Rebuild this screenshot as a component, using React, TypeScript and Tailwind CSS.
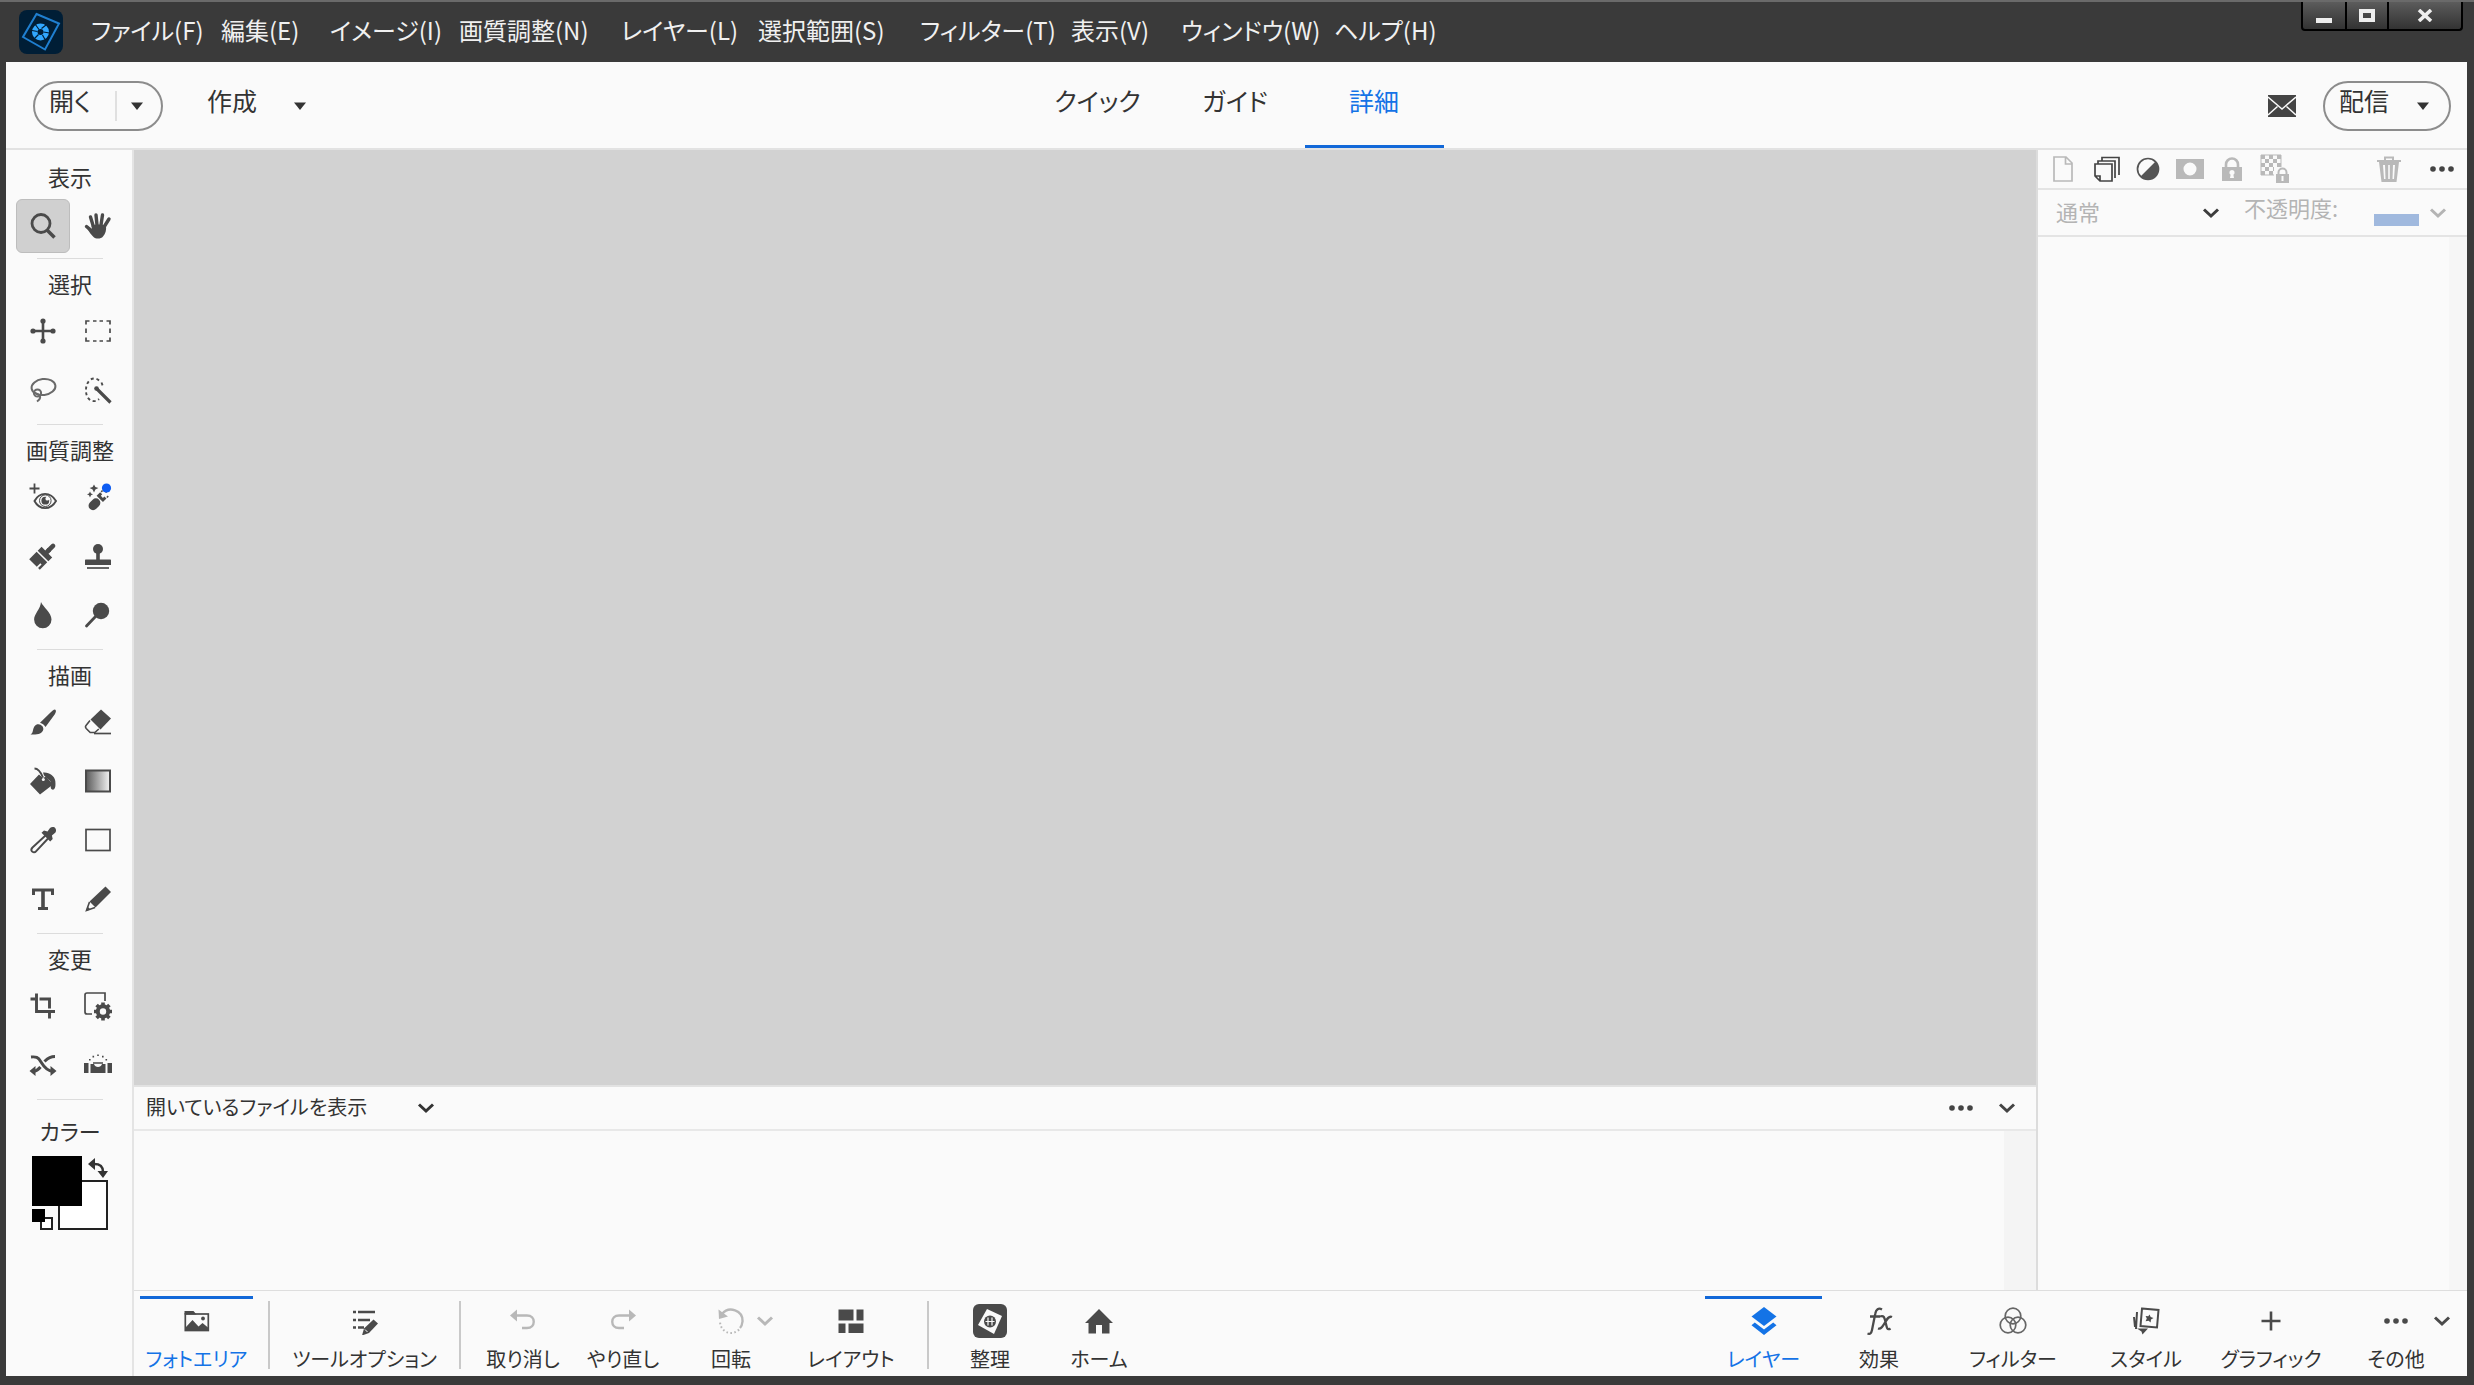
import React from "react";
import type { ReactNode } from "react";

type GlyphProps = { children: ReactNode; className?: string; box?: string };

function Glyph({ children, className = "size-7", box = "0 0 28 28" }: GlyphProps) {
  return (
    <svg viewBox={box} className={"shrink-0 " + className} fill="none" stroke="currentColor" strokeWidth="2" aria-hidden="true">
      {children}
    </svg>
  );
}

const solid = { fill: "currentColor", stroke: "none" };

const Caret = () => (
  <Glyph box="0 0 12 8" className="h-2 w-3">
    <path {...solid} d="M0 0.5h12L6 8z" />
  </Glyph>
);
const Chevron = () => (
  <Glyph box="0 0 18 12" className="h-3 w-[18px]">
    <path d="M2 2.5 9 9l7-6.5" strokeWidth="3" />
  </Glyph>
);
const Dots = () => (
  <Glyph box="0 0 26 8" className="h-2 w-[26px]">
    <circle {...solid} cx="4" cy="4" r="2.800" />
    <circle {...solid} cx="13" cy="4" r="2.800" />
    <circle {...solid} cx="22" cy="4" r="2.800" />
  </Glyph>
);

const icons: Record<string, ReactNode> = {
  zoom: (
    <Glyph>
      <circle cx="12" cy="11.5" r="9" strokeWidth="2.8" />
      <path d="m18 18 7.5 7.5" strokeWidth="3.6" />
    </Glyph>
  ),
  hand: (
    <Glyph>
      <g strokeLinecap="round" strokeWidth="3.4">
        <path d="M9.500 15 6.500 5M13 13 12 3M17 13l1.500-10M20 15l5-8M9 20 2.500 14.500" />
      </g>
      <path {...solid} d="M7.500 13.500c4-1.500 10-1.500 14.500 0 .5 5-.5 8-3 11-2 2.500-7 2.800-9.500.5-2-2-4.500-5-7-9.500l2-1 3.500 2.500z" />
    </Glyph>
  ),
  move: (
    <Glyph>
      <path d="M14 4v20M4 14h20" strokeWidth="2.6" />
      <circle {...solid} cx="14" cy="4" r="2.600" />
      <circle {...solid} cx="14" cy="24" r="2.600" />
      <circle {...solid} cx="4" cy="14" r="2.600" />
      <circle {...solid} cx="24" cy="14" r="2.600" />
    </Glyph>
  ),
  marquee: (
    <Glyph>
      <path d="M2 7.500V4h3.500M22.500 4H26v3.500M26 20.500V24h-3.500M5.500 24H2v-3.500M2 11.500v4.500M26 11.500v4.500M9 4h3.500M15.500 4H19M9 24h3.500M15.500 24H19" strokeWidth="1.700" />
    </Glyph>
  ),
  lasso: (
    <Glyph>
      <g stroke="#6a6a6a" strokeWidth="2">
        <ellipse cx="14.500" cy="11" rx="12" ry="8" transform="rotate(-7 14.500 11)" />
        <circle cx="8.500" cy="17" r="3.600" />
        <path d="M4.500 15.500c1 2.500 5.500 2 6.500 4.500.6 2-.8 4-3 5.500" />
      </g>
    </Glyph>
  ),
  wand: (
    <Glyph>
      <path d="M15 4.500C12 1.500 7.500 2 5 5s-3 6-3 9.500.8 6.500 3.500 9 7 2 9.500-.5M17.500 6.500l1.500 4" strokeDasharray="3 2.800" strokeWidth="1.900" />
      <path d="m12 12 14.500 14.500" strokeWidth="3.200" />
      <circle {...solid} cx="12.500" cy="12.500" r="2.300" />
    </Glyph>
  ),
  redeye: (
    <Glyph>
      <path d="M5.500 0.500v10M0.500 5.500h10" strokeWidth="1.800" />
      <path d="M5.500 18c5-9.500 16-9.500 21.500 0-5.500 9.500-16.500 9.500-21.500 0z" strokeWidth="1.900" />
      <circle cx="16.300" cy="17.700" r="5.800" strokeWidth="1" />
      <circle {...solid} cx="16.300" cy="17.700" r="3.900" />
      <circle cx="18.300" cy="15.700" r="1.900" fill="#fafafa" stroke="none" />
    </Glyph>
  ),
  heal: (
    <Glyph>
      <g transform="rotate(-45 14 17)">
        <rect {...solid} x="2" y="13" width="13" height="9" rx="4.500" />
        <path {...solid} d="M16 13h5v3h-2v3h2v3h-5z" />
        <path d="M22 13.500h3M22 21.500h3" strokeWidth="1.500" strokeDasharray="2 1.500" />
        <circle {...solid} cx="25.500" cy="17" r="1" />
      </g>
      <path {...solid} d="m10 1.500 1.400 2.600 3 1-3 1.400L10 9.500 8.600 6.500l-3-1.400 3-1zM6 8.500l1 2 2 .8-2 1L6 14.500l-1-2.200-2-1 2-.8z" />
      <circle cx="22.500" cy="5" r="4.600" fill="#0d5cf2" stroke="none" />
    </Glyph>
  ),
  smartbrush: (
    <Glyph>
      <g transform="rotate(45 14 14)" {...solid}>
        <rect x="11.700" y="-2.500" width="4.600" height="11" rx="2.300" />
        <path d="M11.700 5h4.600v3.500h5.200v5.500H6.500V8.500h5.200z" />
        <path d="M6.500 15.500h15V26h-2.500v-5h-1.800v5H6.500z" />
      </g>
    </Glyph>
  ),
  stamp: (
    <Glyph>
      <circle {...solid} cx="14" cy="7" r="5" />
      <path {...solid} d="M12.200 10h3.600v7.500H26c.8 0 1 .5 1 1V23H1v-4.500c0-.5.2-1 1-1h10.200z" />
      <path d="M3 26h22" strokeWidth="1.700" />
    </Glyph>
  ),
  drop: (
    <Glyph>
      <path {...solid} d="M12 1c2 5 10.500 10.500 10.500 17.500a8.700 8.700 0 0 1-17.400 0C5 13 11.500 8 12 1z" />
    </Glyph>
  ),
  dodge: (
    <Glyph>
      <circle {...solid} cx="17" cy="10" r="8.200" />
      <path d="m12 15-9.500 10" strokeWidth="2.800" strokeLinecap="round" />
    </Glyph>
  ),
  brush: (
    <Glyph>
      <path {...solid} d="M26 1.500c1.500 1 1 2.500 0 4.500L16.500 19c-1.500-2-3-3.500-5.500-4.200L21.500 4.500c1.500-1.500 3-2.800 4.500-3zM9.500 16.200c3 .3 5.300 2.800 4.800 5.300-.8 4.200-6 5.500-12.800 5 1.500-1 2-2 2.500-4.300.7-3.500 2.500-6.200 5.500-6z" />
    </Glyph>
  ),
  eraser: (
    <Glyph>
      <path {...solid} d="M17 1.500 27 10.500 16.500 21.500 6.500 11.500z" />
      <path d="m6 12.500-4 5c-.8 1-.6 2 .2 3l4 4h4.600l4-3.500" strokeWidth="1.600" />
      <path d="M10 25.500h17" strokeWidth="1.700" />
    </Glyph>
  ),
  bucket: (
    <Glyph>
      <path {...solid} d="m10 7.500 4 3.500 3-1.500 7 8L11 27.500 1 17z" />
      <path d="M5.500 1.500c3.500 0 6 3 8.500 9" strokeWidth="1.900" />
      <path {...solid} d="M14 5.500c6-.7 11.500 3 12.300 8.500.3 3.500.5 7-1.500 8.500-2.500.8-3.500-1.500-3-4 .4-2 .3-3.500-1-5L15 8.500z" />
      <circle cx="14.300" cy="12.500" r="1.500" fill="#fafafa" stroke="none" />
    </Glyph>
  ),
  gradient: (
    <Glyph>
      <defs>
        <linearGradient id="toolGradient">
          <stop offset="0" stopColor="#5a5a5a" />
          <stop offset="1" stopColor="#f4f4f4" />
        </linearGradient>
      </defs>
      <rect x="2" y="3.500" width="24" height="21" fill="url(#toolGradient)" />
    </Glyph>
  ),
  dropper: (
    <Glyph>
      <path d="M16.500 9.500 3.500 21.500c-1.200 1.200-1.500 2.800-.5 4s3 1 4-.2L19 12.500" strokeWidth="1.900" />
      <path {...solid} d="M12.500 6.800 15 4.500l3.500 1L21 2c1.800-1.600 4.500-1.300 5.500.4 1 1.600.6 3.500-.6 4.600l-3 2.500.8 3.500-2.500 2.500z" />
    </Glyph>
  ),
  rect: (
    <Glyph>
      <rect x="2" y="3.500" width="24" height="21" strokeWidth="1.700" />
    </Glyph>
  ),
  type: (
    <Glyph>
      <path {...solid} d="M3 3.500h22v6.500h-3V6.500h-6.200v15.500H19v3H9v-3h3.200V6.500H6V10H3z" />
    </Glyph>
  ),
  pencil: (
    <Glyph>
      <path {...solid} d="M21.500 1.500 27 7 11.500 22.500 5.500 16.500z" />
      <path d="m5.500 17-3 8.500 8.500-3" strokeWidth="1.600" />
      <path {...solid} d="m2 26 1.500-4.500 3 3z" />
    </Glyph>
  ),
  crop: (
    <Glyph>
      <path d="M7.500 1.500v18H26M1.500 7H6M10.500 7h10v9.500M20.500 21v5.500" strokeWidth="2.900" />
    </Glyph>
  ),
  recompose: (
    <Glyph className="h-[30px] w-[30px]" box="0 0 30 30">
      <path d="M9 23H4a2 2 0 0 1-2-2V4a2 2 0 0 1 2-2h18v8" strokeWidth="1.700" />
      <circle cx="20" cy="20.500" r="5.200" strokeWidth="4" />
      <path d="M20 11.500v3M20 26.500v3M11 20.500h3M26 20.500h3M13.600 14.100l2.200 2.200M24.200 24.700l2.200 2.200M26.400 14.100l-2.200 2.200M15.800 24.700l-2.200 2.200" strokeWidth="3.600" />
    </Glyph>
  ),
  shuffle: (
    <Glyph>
      <path d="M2 6c5-.5 7 0 10 5s6 9 12 9.500M26 5.500c-6 0-8 2.500-10.500 5M11.500 16c-2 2.500-3.500 4-7.500 4.500" strokeWidth="3" />
      <path {...solid} d="m27.500 20-6-5v10zM.5 20l6-5v10z" />
    </Glyph>
  ),
  level: (
    <Glyph>
      <path {...solid} d="M0 12h4.500v10H0zM23.500 12H28v10h-4.500zM6.500 13h3.500c1 4 7 4 8 0h3.500v9h-15z" />
      <path d="M9 12h10" strokeWidth="1.500" />
      <path {...solid} d="M13.200 3.500h1.600v1.600h-1.600zM8.500 4.800h1.600v1.600H8.500zM18 4.800h1.600v1.600H18zM5 8h1.600v1.600H5zM21.500 8h1.600v1.600h-1.600z" />
    </Glyph>
  ),
  photobin: (
    <Glyph>
      <path {...solid} d="M1.500 4h9l3 3.500h-12z" />
      <rect x="2.300" y="7" width="23" height="16.500" strokeWidth="1.700" />
      <path {...solid} d="m3 20 6.500-7 6 6.500 4-3.500 5.500 4.500V24H3z" />
      <circle {...solid} cx="20" cy="11.500" r="1.900" />
    </Glyph>
  ),
  options: (
    <Glyph>
      <path d="M2 5h3M7 5h17M2 13h3M7 13h12M2 20.500h3M7 20.500h6" strokeWidth="2.600" />
      <path {...solid} d="m22.500 12.500 4.500 4-9 9.500-7 2.500 2-7z" />
      <path d="m14 22.500 2.500 2.500" stroke="#fafafa" strokeWidth="1" />
    </Glyph>
  ),
  undo: (
    <Glyph>
      <path d="M4 8.500h14c9 0 9 12.500 0 12.500h-5" strokeWidth="2.400" />
      <path {...solid} d="m1 8.500 7-6v12z" />
    </Glyph>
  ),
  redo: (
    <Glyph>
      <path d="M24 8.500H10c-9 0-9 12.500 0 12.500h5" strokeWidth="2.400" />
      <path {...solid} d="m27 8.500-7-6v12z" />
    </Glyph>
  ),
  rotate: (
    <Glyph>
      <path d="M5 7C12-1.500 26 3.500 25.500 14.500c-.3 3-1 5-2.500 6.500" strokeWidth="2.400" />
      <path d="M22 22.500C16 29 4 26.500 3 15" strokeWidth="2" strokeDasharray="1.600 2.400" />
      <path {...solid} d="M1.500 2.500 2 12l9-2.500z" />
    </Glyph>
  ),
  layout: (
    <Glyph>
      <path {...solid} d="M1.500 2.500h15v11h-15zM19.500 2.500h7v11h-7zM1.500 16.500h7V26h-7zM11.500 16.500h15V26h-15z" />
    </Glyph>
  ),
  organizer: (
    <Glyph box="0 0 36 36" className="size-9">
      <rect {...solid} x="1" y="1" width="34" height="34" rx="6" />
      <path d="M15 6 30 13 22 31 6 22z" fill="#fafafa" stroke="none" />
      <circle {...solid} cx="18" cy="18.500" r="6" />
      <path d="M16 14.500v8M20 14.500v8M13.500 18.500h9" stroke="#fafafa" strokeWidth="1.200" />
    </Glyph>
  ),
  home: (
    <Glyph>
      <path {...solid} d="M14 2 28 16h-3.500v10.500H17V18h-6v8.500H3.500V16H0z" />
    </Glyph>
  ),
  layers: (
    <Glyph>
      <path {...solid} d="m14 0 12.500 9.500L14 19 1.500 9.500z" />
      <path {...solid} d="m14 22.500 9.200-7 3.300 2.700L14 28 1.500 18.200l3.300-2.700z" />
    </Glyph>
  ),
  effects: (
    <Glyph>
      <path d="M17 2.500c-3.500-2-6 0-6.700 4L7 23c-.7 3.500-2 4.500-4.500 3.500M5 9.500h10M15 9.500c4-1.500 4.500 1 5.500 5.500s1.500 9 5 6.500M27 10c-3-1.500-5 2-7 5.500s-4 7-7 6" strokeWidth="2.300" />
    </Glyph>
  ),
  filters: (
    <Glyph>
      <g strokeWidth="1.700" stroke="#666">
        <circle cx="14" cy="9" r="7.800" />
        <circle cx="9" cy="18" r="7.800" />
        <circle cx="19" cy="18" r="7.800" />
      </g>
    </Glyph>
  ),
  styles: (
    <Glyph>
      <path d="M10 1.500 26.500 3 25 20.500 8.500 19z" strokeWidth="2" />
      <path {...solid} d="m17.500 7.500 1.200 2.500 2.800 1-2.500 1.500-.4 3-2-1.800-3 .5 1.200-2.700-1.200-2.500 2.700.3z" />
      <path d="M5 5 4 22M2 10l1 10" strokeWidth="2" />
      <path {...solid} d="M5 21.500h11l-5.500 6-1-3z" />
    </Glyph>
  ),
  plus: (
    <Glyph>
      <path d="M14 4.500v19M4.500 14h19" strokeWidth="2.600" />
    </Glyph>
  ),
  more: <Dots />,
};

const menus = [
  { label: "ファイル(F)", w: "w-[130px]" },
  { label: "編集(E)", w: "w-[109px]" },
  { label: "イメージ(I)", w: "w-[129px]" },
  { label: "画質調整(N)", w: "w-[162px]" },
  { label: "レイヤー(L)", w: "w-[137px]" },
  { label: "選択範囲(S)", w: "w-[162px]" },
  { label: "フィルター(T)", w: "w-[151px]" },
  { label: "表示(V)", w: "w-[110px]" },
  { label: "ウィンドウ(W)", w: "w-[153px]" },
  { label: "ヘルプ(H)", w: "w-[110px]" },
];

const toolGroups: { title: string; tools: [string, string][] }[] = [
  { title: "選択", tools: [["move", "移動"], ["marquee", "長方形選択"], ["lasso", "なげなわ"], ["wand", "クイック選択"]] },
  { title: "画質調整", tools: [["redeye", "赤目修正"], ["heal", "スポット修復"], ["smartbrush", "スマートブラシ"], ["stamp", "コピースタンプ"], ["drop", "ぼかし"], ["dodge", "覆い焼き"]] },
  { title: "描画", tools: [["brush", "ブラシ"], ["eraser", "消しゴム"], ["bucket", "塗りつぶし"], ["gradient", "グラデーション"], ["dropper", "スポイト"], ["rect", "シェイプ"], ["type", "文字"], ["pencil", "鉛筆"]] },
  { title: "変更", tools: [["crop", "切り抜き"], ["recompose", "再構成"], ["shuffle", "コンテンツに応じた移動"], ["level", "角度補正"]] },
];

function ToolTitle({ children }: { children: ReactNode }) {
  return <h2 className="flex h-11 items-center justify-center pt-1 text-[22px] leading-6 whitespace-nowrap">{children}</h2>;
}

function Tool({ id, label, active }: { id: string; label: string; active?: boolean }) {
  return (
    <button
      aria-label={label}
      className={"flex h-[54px] w-[54px] items-center justify-center rounded-md border text-[#4a4a4a] " + (active ? "border-[#bdbdbd] bg-[#d0d0d0]" : "border-transparent")}
    >
      {icons[id]}
    </button>
  );
}

function Divider() {
  return <div className="mx-auto h-px w-[66px] bg-[#dcdcdc]" />;
}

function Sidebar() {
  return (
    <aside className="flex w-32 shrink-0 flex-col border-r-2 border-[#e4e4e4] bg-[#fafafa] pl-0.5">
      <div className="h-0.5" />
      <ToolTitle>表示</ToolTitle>
      <div className="grid grid-cols-[54px_54px] justify-center gap-x-px pt-[3px] pb-[5px]">
        <Tool id="zoom" label="ズーム" active />
        <Tool id="hand" label="手のひら" />
      </div>
      <Divider />
      {toolGroups.map((g) => (
        <React.Fragment key={g.title}>
          <ToolTitle>{g.title}</ToolTitle>
          <div className="grid grid-cols-[54px_54px] justify-center gap-x-px gap-y-[5px] pt-px pb-[7px]">
            {g.tools.map(([id, label]) => (
              <Tool key={id} id={id} label={label} />
            ))}
          </div>
          <Divider />
        </React.Fragment>
      ))}
      <h2 className="mt-[18px] text-center text-[22px] leading-6">カラー</h2>
      <div className="relative mx-auto mt-3.5 h-[74px] w-[76px]">
        <button aria-label="背景色" className="absolute right-0 bottom-0 size-[50px] border-2 border-[#222] bg-white" />
        <button aria-label="描画色" className="absolute top-0 left-0 size-[50px] bg-black" />
        <button aria-label="初期設定の色" className="absolute bottom-0 left-0 size-[21px]">
          <span className="absolute right-0 bottom-0 size-[13px] border-2 border-[#222] bg-white" />
          <span className="absolute top-0 left-0 size-[13px] bg-black" />
        </button>
        <button aria-label="色を入れ替え" className="absolute top-0.5 right-0">
          <Glyph box="0 0 20 20" className="size-5">
            <path d="M6 6c6 0 9 2 9 8" strokeWidth="2.600" />
            <path {...solid} d="m0 6 7-6v12zM9.500 13h10.500l-5 7z" />
          </Glyph>
        </button>
      </div>
    </aside>
  );
}

function BarItem({ icon, label, w, active, muted }: { icon: string; label: string; w: string; active?: boolean; muted?: boolean }) {
  return (
    <button className={"relative flex shrink-0 flex-col items-center pt-[7px] " + w + (active ? " text-[#1473e6]" : "")}>
      {active && <span className="absolute inset-x-0 top-0 h-[3px] bg-[#1268d8]" />}
      <span className={"flex h-9 items-center justify-center " + (muted ? "text-[#b8b8b8]" : active && icon === "layers" ? "" : "text-[#4a4a4a]")}>{icons[icon]}</span>
      <span className="mt-1.5 text-xl leading-7 whitespace-nowrap">{label}</span>
    </button>
  );
}

function BarRule() {
  return <div className="mt-[5px] h-[68px] w-0.5 shrink-0 bg-[#c9c9c9]" />;
}

function BottomBar() {
  return (
    <footer className="flex h-[86px] shrink-0 border-t border-[#dedede] bg-[#fafafa] pt-[5px]">
      <BarItem icon="photobin" label="フォトエリア" w="ml-1.5 w-[113px]" active />
      <div className="w-[15px]" />
      <BarRule />
      <BarItem icon="options" label="ツールオプション" w="w-[189px]" />
      <BarRule />
      <BarItem icon="undo" label="取り消し" w="ml-3 w-[100px]" muted />
      <BarItem icon="redo" label="やり直し" w="w-[100px]" muted />
      <BarItem icon="rotate" label="回転" w="ml-[34px] w-12" muted />
      <button aria-label="回転の種類" className="flex h-[50px] w-5 items-center justify-center text-[#b8b8b8]">
        <Chevron />
      </button>
      <BarItem icon="layout" label="レイアウト" w="ml-4 w-[120px]" />
      <div className="w-4" />
      <BarRule />
      <BarItem icon="organizer" label="整理" w="ml-1.5 w-[110px]" />
      <BarItem icon="home" label="ホーム" w="w-[108px]" />
      <div className="grow" />
      <BarItem icon="layers" label="レイヤー" w="w-[117px]" active />
      <BarItem icon="effects" label="効果" w="w-[114px]" />
      <BarItem icon="filters" label="フィルター" w="w-[154px]" />
      <BarItem icon="styles" label="スタイル" w="w-[112px]" />
      <BarItem icon="plus" label="グラフィック" w="w-[138px]" />
      <BarItem icon="more" label="その他" w="ml-6 w-16" />
      <button aria-label="その他を開く" className="mr-[11px] flex h-[50px] w-7 items-center justify-center text-[#4a4a4a]">
        <Chevron />
      </button>
    </footer>
  );
}

function TitleBar() {
  return (
    <header className="flex h-[62px] shrink-0 items-start justify-between border-t-2 border-[#6a6a6a] bg-[#3a3a3a] pr-[11px] pl-[19px]">
      <div className="flex h-[60px] items-center">
        <svg viewBox="0 0 44 44" className="size-11" aria-label="Photoshop Elements">
          <rect width="44" height="44" rx="8" fill="#001e36" />
          <path d="M17.500 4 40 13.500 26 39.500 4 27z" fill="none" stroke="#1f7fd0" strokeWidth="2" />
          <circle cx="21.500" cy="22" r="8.500" fill="#31a8ff" />
          <circle cx="21.500" cy="22" r="3" fill="#001e36" />
          <path d="m16 14 4 5.500M27 15l-4.500 3.500M30.500 23l-6-1M26 29.500 23.500 25M15.500 28.500l4-4M13 20.500l5.500 1" stroke="#001e36" strokeWidth="1.200" />
        </svg>
        <nav className="ml-7 flex pb-1 text-2xl leading-8 text-[#f0f0f0]">
          {menus.map((m) => (
            <button key={m.label} className={"text-left whitespace-nowrap " + m.w}>
              {m.label}
            </button>
          ))}
        </nav>
      </div>
      <div className="flex h-[29px] divide-x-2 divide-black rounded-b border-2 border-t-0 border-black bg-linear-to-b from-[#5c5c5c] to-[#333] text-[#eee]">
        <button aria-label="最小化" className="flex w-[44px] items-center justify-center pt-2.5">
          <span className="h-[5px] w-4 bg-current" />
        </button>
        <button aria-label="最大化" className="flex w-[42px] items-center justify-center">
          <span className="h-[13px] w-4 border-4 border-current" />
        </button>
        <button aria-label="閉じる" className="flex w-[72px] items-center justify-center">
          <Glyph box="0 0 16 13" className="h-[13px] w-4">
            <path d="m2 1 12 11M14 1 2 12" strokeWidth="3.600" />
          </Glyph>
        </button>
      </div>
    </header>
  );
}

function ModeBar() {
  return (
    <div className="grid h-[88px] shrink-0 grid-cols-[1fr_auto_1fr] border-b-2 border-[#e2e2e2] text-[25px] leading-8">
      <div className="flex items-start pt-[19px] pl-[27px]">
        <button className="flex h-[50px] w-[130px] items-center rounded-full border-2 border-[#8c8c8c] pl-3.5">
          <span className="w-[66px] pb-3 text-left">開く</span>
          <span className="mr-3.5 h-[30px] w-0.5 bg-[#e0e0e0]" />
          <Caret />
        </button>
        <button className="ml-11 flex h-[50px] items-center">
          <span className="w-[87px] pb-3 text-left">作成</span>
          <Caret />
        </button>
      </div>
      <div className="flex">
        <button className="w-[136px] pb-2.5">クイック</button>
        <button className="w-[139px] pb-2.5">ガイド</button>
        <button className="w-[139px] border-b-[3px] border-[#1268d8] pb-[7px] text-[#1473e6]">詳細</button>
      </div>
      <div className="flex items-start justify-end pt-[19px] pr-4">
        <button aria-label="お知らせ" className="mr-[27px] flex h-[50px] items-center">
          <Glyph box="0 0 28 22" className="h-[22px] w-7 text-[#444]">
            <rect {...solid} width="28" height="22" />
            <path d="m0 2 10.500 9L14 14l3.500-3L28 2M0 20l9.500-8.500M28 20l-9.500-8.500" stroke="#fafafa" strokeWidth="1.500" />
          </Glyph>
        </button>
        <button className="flex h-[50px] w-32 items-center rounded-full border-2 border-[#8c8c8c] pl-3.5">
          <span className="w-[78px] pb-3 text-left">配信</span>
          <Caret />
        </button>
      </div>
    </div>
  );
}

function PhotoBin() {
  return (
    <section className="flex h-[205px] shrink-0 flex-col border-t-2 border-[#e2e2e2]">
      <div className="flex h-[44px] items-center justify-between border-b-2 border-[#e8e8e8] pr-5 pl-3">
        <button className="flex items-center text-xl leading-7">
          <span className="w-[271px] pb-0.5 text-left whitespace-nowrap">開いているファイルを表示</span>
          <Chevron />
        </button>
        <div className="flex items-center gap-6 text-[#444]">
          <button aria-label="フォトエリアのオプション"><Dots /></button>
          <button aria-label="フォトエリアを閉じる"><Chevron /></button>
        </div>
      </div>
      <div className="flex grow justify-end">
        <div className="w-8 bg-[#f4f4f4]" />
      </div>
    </section>
  );
}

function LayerPanel() {
  return (
    <aside className="flex w-[431px] shrink-0 flex-col border-l-2 border-[#dcdcdc]">
      <div className="flex h-10 items-center border-b-2 border-[#e4e4e4] pl-[15px] text-[#b9b9b9]">
        <button aria-label="新規レイヤー" className="mr-[21px]">
          <Glyph box="0 0 20 26" className="h-[26px] w-5">
            <path d="M1 1h12l6 6v18H1zM12.500 1v7H19" strokeWidth="1.700" />
          </Glyph>
        </button>
        <button aria-label="新規グループ" className="mr-4 text-[#444]">
          <Glyph box="0 0 26 26" className="size-[26px]">
            <path d="M6 25 1 20V8h17v17zM1 20h5v5M4 8V5h17v17M8 5V1.500h17V19" strokeWidth="1.700" />
          </Glyph>
        </button>
        <button aria-label="調整レイヤー" className="mr-4 text-[#555]">
          <Glyph box="0 0 24 24" className="size-6">
            <circle cx="12" cy="12" r="10.500" strokeWidth="1.700" />
            <path {...solid} d="M19.500 4.500a10.600 10.600 0 0 1-15 15z" />
          </Glyph>
        </button>
        <button aria-label="レイヤーマスク" className="mr-[18px]">
          <Glyph box="0 0 28 20" className="h-5 w-7">
            <path {...solid} fillRule="evenodd" d="M0 0h28v20H0zM14 3.500a6.500 6.500 0 1 0 0 13 6.500 6.500 0 0 0 0-13z" />
          </Glyph>
        </button>
        <button aria-label="ロック" className="mr-[18px]">
          <Glyph box="0 0 20 24" className="h-6 w-5">
            <path {...solid} fillRule="evenodd" d="M0 10h20v14H0zM10 13a2.600 2.600 0 0 0-1.400 4.800L8 21h4l-.6-3.200A2.600 2.600 0 0 0 10 13z" />
            <path d="M4 10V7.500a6 6 0 0 1 12 0V10" strokeWidth="2.600" />
          </Glyph>
        </button>
        <button aria-label="透明部分をロック">
          <Glyph box="0 0 29 30" className="h-[30px] w-[29px]">
            <path d="M1 1h20v20H1z" strokeWidth="1" />
            <path {...solid} d="M1 1h4v4H1zM9 1h4v4H9zM17 1h4v4h-4zM5 5h4v4H5zM13 5h4v4h-4zM1 9h4v4H1zM9 9h4v4H9zM17 9h4v4h-4zM5 13h4v4H5zM13 13h4v4h-4zM1 17h4v4H1zM9 17h4v4H9z" />
            <path d="M14 13h16v17H14z" fill="#fafafa" stroke="none" />
            <path {...solid} fillRule="evenodd" d="M16 20h13v9H16zM21.500 22v5h2v-5z" />
            <path d="M18.500 20v-1.500a4 4 0 0 1 8 0V20" />
          </Glyph>
        </button>
        <button aria-label="削除" className="mr-7 ml-auto">
          <Glyph box="0 0 24 26" className="h-[26px] w-6">
            <path d="M0 5h24M8 4V1.500h8V4" strokeWidth="2" />
            <path {...solid} fillRule="evenodd" d="M2 6h20l-2.500 20h-15zM6 9l1 14h1.500L8 9zM11.200 9v14h1.600V9zM16 9l-.5 14H17l1-14z" />
          </Glyph>
        </button>
        <button aria-label="パネルメニュー" className="mr-3 text-[#444]"><Dots /></button>
      </div>
      <div className="flex h-[47px] items-center border-b-2 border-[#e4e4e4] pr-5 pl-[18px] text-[22px] leading-6 text-[#b4b4b4]">
        <button className="flex items-center">
          <span className="w-[146px] pb-1 text-left">通常</span>
          <span className="text-[#3c3c3c]"><Chevron /></span>
        </button>
        <span className="ml-6 pb-3 whitespace-nowrap">不透明度:</span>
        <button aria-label="不透明度の値" className="ml-auto flex items-center gap-2.5">
          <span className="mt-3.5 h-3 w-[45px] bg-[#a0b9de]" />
          <Chevron />
        </button>
      </div>
      <div className="flex grow justify-end">
        <div className="w-[18px] bg-[#f6f6f6]" />
      </div>
    </aside>
  );
}

export default function App() {
  return (
    <div className="flex h-screen flex-col overflow-hidden bg-[#3a3a3a] font-['Noto_Sans_CJK_JP','Noto_Sans',sans-serif] text-[#333] [font-feature-settings:'palt']">
      <TitleBar />
      <main className="mr-[7px] mb-[9px] ml-1.5 flex min-h-0 grow flex-col bg-[#fafafa]">
        <ModeBar />
        <div className="flex min-h-0 grow">
          <Sidebar />
          <div className="flex min-w-0 grow flex-col">
            <div className="flex min-h-0 grow">
              <div className="flex min-w-0 grow flex-col">
                <div className="grow bg-[#d2d2d2]" />
                <PhotoBin />
              </div>
              <LayerPanel />
            </div>
            <BottomBar />
          </div>
        </div>
      </main>
    </div>
  );
}
